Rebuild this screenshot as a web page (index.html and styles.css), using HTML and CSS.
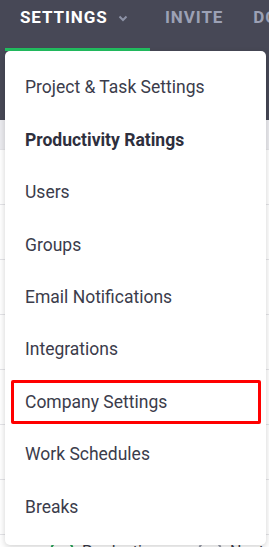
FILE: index.html
```html
<!DOCTYPE html>
<html>
<head>
<meta charset="utf-8">
<link rel="stylesheet" href="styles.css">
</head>
<body>
<div class="page">
  <header class="header">
    <nav class="nav">
      <div class="nav-item active">SETTINGS
        <svg class="chev" width="10" height="7" viewBox="0 0 10 7"><path d="M1.5 1.5 L5 5 L8.5 1.5" fill="none" stroke="#8d92a6" stroke-width="2"/></svg>
      </div>
      <div class="nav-item">INVITE</div>
      <div class="nav-item">DOWNLOADS</div>
    </nav>
    <div class="subbar"></div>
  </header>
  <main class="content">
    <div class="row r1"></div>
    <div class="row r2"></div>
    <div class="row r3"></div>
    <div class="row r4"></div>
    <div class="row r5"></div>
    <div class="row r6"></div>
    <div class="row r7"></div>
    <div class="row r8"></div>
    <div class="legend">
      <span class="dot green"></span><span class="ltext">Productive</span>
      <span class="dot gray"></span><span class="ltext">Neutral</span>
    </div>
  </main>

  <div class="menu">
    <div class="menu-item">Project &amp; Task Settings</div>
    <div class="menu-item bold">Productivity Ratings</div>
    <div class="menu-item">Users</div>
    <div class="menu-item">Groups</div>
    <div class="menu-item">Email Notifications</div>
    <div class="menu-item">Integrations</div>
    <div class="menu-item">Company Settings</div>
    <div class="menu-item">Work Schedules</div>
    <div class="menu-item">Breaks</div>
  </div>
  <div class="highlight"></div>
</div>
</body>
</html>
```

FILE: styles.css
```css
* { box-sizing: border-box; }
html, body { margin: 0; padding: 0; }
body {
  width: 269px;
  height: 547px;
  overflow: hidden;
  font-family: Roboto, "Liberation Sans", sans-serif;
  background: #f4f4f6;
}
.page { position: relative; width: 269px; height: 547px; overflow: hidden; }
.header { background: #474856; height: 120px; }
.nav {
  display: flex;
  height: 51px;
  padding-left: 5px;
  white-space: nowrap;
}
.nav-item {
  flex-shrink: 0;
  display: flex;
  align-items: flex-start;
  padding: 7px 0 0 0;
  font-size: 17px;
  font-weight: 700;
  letter-spacing: 0.9px;
  color: #9ca1b5;
  margin-right: 30px;
  height: 51px;
}
.nav-item.active {
  color: #ffffff;
  padding-left: 15px;
  width: 145px;
  margin-right: 15px;
  border-bottom: 3px solid #22bf60;
}
.chev { margin: 8px 0 0 10px; }
.content { background: #ffffff; }
.row { height: 55px; border-bottom: 1px solid #e4e4e8; }
.r1 { height: 30px; background: #ebebef; }
.legend {
  display: flex;
  align-items: center;
  padding: 4px 0 0 50px;
  font-size: 16px;
  color: #3a3b49;
}
.dot { width: 24px; height: 24px; border-radius: 50%; border: 2px solid #2aa85a; margin-right: 8px; flex-shrink: 0; }
.dot.gray { border-color: #9a9eab; margin-left: 40px; }
.menu {
  position: absolute;
  left: 5px;
  top: 51px;
  width: 261px;
  height: 494px;
  background: #ffffff;
  border-radius: 5px;
  box-shadow: 0 2px 6px rgba(0,0,0,0.18);
  padding: 10px 0 12px 0;
  display: flex;
  flex-direction: column;
}
.menu-item {
  height: 52.5px;
  display: flex;
  align-items: center;
  padding-left: 20px;
  font-size: 17.5px;
  color: #3b3c4b;
}
.menu-item.bold { font-weight: 700; color: #2e2f3d; }
.highlight {
  position: absolute;
  left: 11px;
  top: 380px;
  width: 250px;
  height: 44px;
  border: 3px solid #ff0000;
  border-radius: 2px;
}
```
